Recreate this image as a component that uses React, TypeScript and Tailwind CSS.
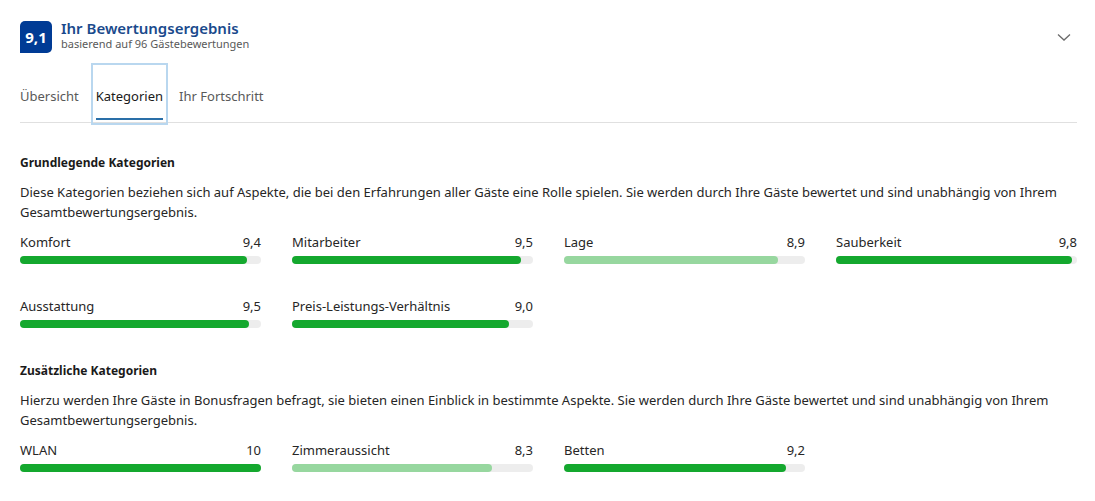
import React from "react";

type Cat = { name: string; score: number };

const basic: Cat[] = [
  { name: "Komfort", score: 9.4 },
  { name: "Mitarbeiter", score: 9.5 },
  { name: "Lage", score: 8.9 },
  { name: "Sauberkeit", score: 9.8 },
  { name: "Ausstattung", score: 9.5 },
  { name: "Preis-Leistungs-Verhältnis", score: 9.0 },
];

const extra: Cat[] = [
  { name: "WLAN", score: 10 },
  { name: "Zimmeraussicht", score: 8.3 },
  { name: "Betten", score: 9.2 },
];

function fmt(n: number) {
  if (n === 10) return "10";
  return n.toFixed(1).replace(".", ",");
}

export default function App() {
  return (
    <main className="min-h-screen bg-white pl-5 pr-[18px] text-[#262626] font-['Segoe_UI','Noto_Sans',sans-serif]">
      {/* Kopfzeile */}
      <header className="flex items-start justify-between pt-[21px]">
        <div className="flex items-center gap-[9px]">
          <div className="flex h-8 w-8 items-center justify-center rounded-[5px] rounded-bl-none bg-[#003b95] text-[15px] font-bold text-white">
            9,1
          </div>
          <div className="-mt-[4px] flex flex-col">
            <h1 className="text-[15px] font-semibold leading-[18px] text-[#1a4a8c]">
              Ihr Bewertungsergebnis
            </h1>
            <p className="text-[11px] leading-[14px] text-[#595959]">
              basierend auf 96 Gästebewertungen
            </p>
          </div>
        </div>
        <svg
          className="mr-[5px] mt-[11px]"
          width="16"
          height="10"
          viewBox="0 0 16 10"
          fill="none"
          stroke="#6b6b6b"
          strokeWidth="1.3"
        >
          <path d="M2 2.5 L8 8 L14 2.5" />
        </svg>
      </header>

      {/* Tabs */}
      <nav className="mt-[13px] flex gap-[13px] border-b border-[#e0e0e0] text-[13px]">
        <span className="-ml-[2px] flex h-[56px] items-center px-[2px] pt-[6px] text-[#595959]">Übersicht</span>
        <span className="relative flex h-[56px] items-center px-[2px] pt-[6px] text-[#1a1a1a] outline-2 outline-offset-1 outline-[#b9d7ef]">
          Kategorien
          <span className="absolute bottom-[2px] left-[2px] right-[2px] h-[2px] bg-[#2a6fa8]" />
        </span>
        <span className="-ml-[1px] flex h-[56px] items-center px-[2px] pt-[6px] text-[#595959]">Ihr Fortschritt</span>
      </nav>

      <Section
        title="Grundlegende Kategorien"
        text="Diese Kategorien beziehen sich auf Aspekte, die bei den Erfahrungen aller Gäste eine Rolle spielen. Sie werden durch Ihre Gäste bewertet und sind unabhängig von Ihrem Gesamtbewertungsergebnis."
        items={basic}
        className="pt-[32px]"
      />
      <Section
        title="Zusätzliche Kategorien"
        text="Hierzu werden Ihre Gäste in Bonusfragen befragt, sie bieten einen Einblick in bestimmte Aspekte. Sie werden durch Ihre Gäste bewertet und sind unabhängig von Ihrem Gesamtbewertungsergebnis."
        items={extra}
        className="pt-[35px]"
      />
    </main>
  );
}

function Section({
  title,
  text,
  items,
  className,
}: {
  title: string;
  text: string;
  items: Cat[];
  className?: string;
}) {
  return (
    <section className={className}>
      <h2 className="text-[12px] font-bold leading-[16px] text-[#1a1a1a]">{title}</h2>
      <p className="mt-[11px] text-[13px] leading-[20px] pr-[12px]">{text}</p>
      <div className="mt-[11px] grid grid-cols-4 gap-x-[31px] gap-y-[33px]">
        {items.map((c) => (
          <ScoreBar key={c.name} {...c} />
        ))}
      </div>
    </section>
  );
}

function ScoreBar({ name, score }: Cat) {
  const light = score < 9;
  return (
    <div>
      <div className="flex justify-between text-[13px] leading-[18px]">
        <span>{name}</span>
        <span>{fmt(score)}</span>
      </div>
      <div className="mt-[5px] h-[8px] rounded-full bg-[#ededed]">
        <div
          className={light ? "h-full rounded-full bg-[#97d79f]" : "h-full rounded-full bg-[#14a82e]"}
          style={{ width: `${score * 10}%` }}
        />
      </div>
    </div>
  );
}
